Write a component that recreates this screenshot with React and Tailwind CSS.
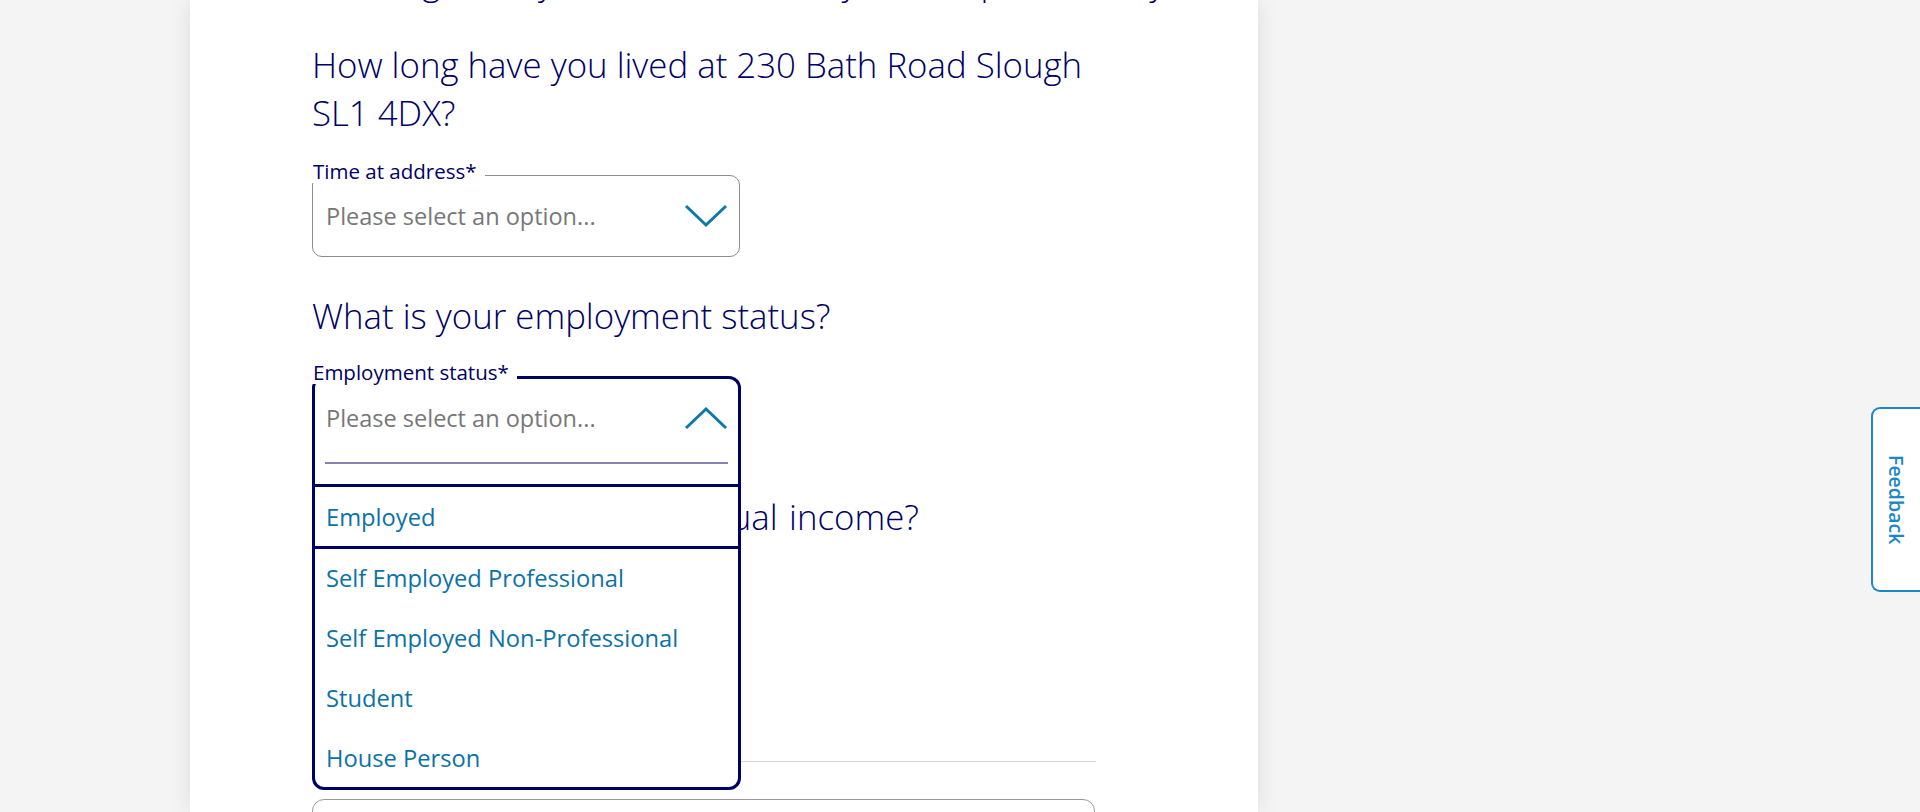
import React from "react";

function Chevron({ up }) {
  return (
    <svg width="44" height="24" viewBox="0 0 44 24" className="shrink-0">
      <polyline
        points={up ? "2,22 22,3 42,22" : "2,2 22,21 42,2"}
        fill="none"
        stroke="#0b7aa8"
        strokeWidth="3"
      />
    </svg>
  );
}

export default function App() {
  const items = [
    "Self Employed Professional",
    "Self Employed Non-Professional",
    "Student",
    "House Person",
    "Retired",
    "Unemployed",
  ];
  return (
    <div
      className="relative flex h-[812px] w-full overflow-hidden bg-[#f4f4f4]"
      style={{ fontFamily: '"Open Sans", "Liberation Sans", sans-serif' }}
    >
      <div className="ml-[190px] flex h-[812px] w-[1068px] flex-col bg-white pl-[122px] shadow-[0_0_22px_rgba(0,0,0,0.09)]">
        <div className="flex w-[784px] flex-col">
          <div className="mt-[-42px] h-[48px] whitespace-nowrap text-[34.8px] font-light leading-[48px] text-[#000066]">
            Please give us your address history for the past three years
          </div>

          <h2 className="mt-[35px] text-[34.8px] font-light leading-[48px] text-[#000066]">
            How long have you lived at 230 Bath Road Slough
            <br />
            SL1 4DX?
          </h2>

          <div className="relative mt-[38px] w-[428px]">
            <span className="absolute left-0 top-[-16px] z-10 bg-white pl-[1px] pr-[8px] text-[20.5px] leading-[24px] text-[#000066]">
              Time at address*
            </span>
            <div className="flex h-[82px] items-center justify-between rounded-[10px] border border-[#8c8c8c] pl-[13px] pr-[11px]">
              <span className="text-[23.5px] leading-[32px] text-[#777777]">
                Please select an option...
              </span>
              <Chevron />
            </div>
          </div>

          <h2 className="mt-[35px] text-[34.8px] font-light leading-[48px] text-[#000066]">
            What is your employment status?
          </h2>

          <div className="relative z-20 mt-[36px] h-[82px] w-[429px]">
            <div className="absolute left-0 top-0 w-[429px] rounded-[12px] border-[3px] border-[#000066] bg-white">
              <div className="flex flex-col px-[10px] pt-[23px]">
                <div className="flex items-start justify-between">
                  <span className="pl-[1px] text-[23.5px] leading-[32px] text-[#777777]">
                    Please select an option...
                  </span>
                  <div className="mt-[4px]">
                    <Chevron up />
                  </div>
                </div>
                <div className="mt-[28px] h-[2px] bg-[#8383b5]" />
                <div className="h-[20px]" />
              </div>
              <div className="flex h-[303px] flex-col overflow-hidden">
                <div className="flex h-[65px] shrink-0 items-center border-y-[3px] border-[#000066] px-[11px] text-[23.7px] leading-[32px] text-[#0b72a8]">
                  Employed
                </div>
                {items.map((t) => (
                  <div
                    key={t}
                    className="flex h-[60px] shrink-0 items-center px-[11px] pb-[2px] text-[23.7px] leading-[32px] text-[#0b72a8]"
                  >
                    {t}
                  </div>
                ))}
              </div>
            </div>
            <span className="absolute left-0 top-[-16px] z-10 bg-white pl-[1px] pr-[8px] text-[20.5px] leading-[24px] text-[#000066]">
              Employment status*
            </span>
          </div>

          <h2 className="mt-[35px] whitespace-nowrap text-[34.8px] font-light leading-[48px] text-[#000066] [word-spacing:2.5px]">
            What is your personal annual income?
          </h2>

          <div className="relative mt-[37px] w-[428px]">
            <div className="h-[82px] rounded-[10px] border border-[#8c8c8c]" />
          </div>

          <div className="mt-[101px] h-px bg-[#d4d4d4]" />

          <div className="mt-[37px] h-[80px] w-[783px] rounded-t-[12px] border border-[#999999]" />
        </div>
      </div>

      <div className="absolute right-0 top-[407px] flex h-[185px] w-[49px] items-center justify-center rounded-l-[9px] border-2 border-r-0 border-[#1c87c6] bg-white">
        <span className="text-[19.5px] font-semibold text-[#1c87c6] [writing-mode:vertical-rl]">
          Feedback
        </span>
      </div>
    </div>
  );
}
